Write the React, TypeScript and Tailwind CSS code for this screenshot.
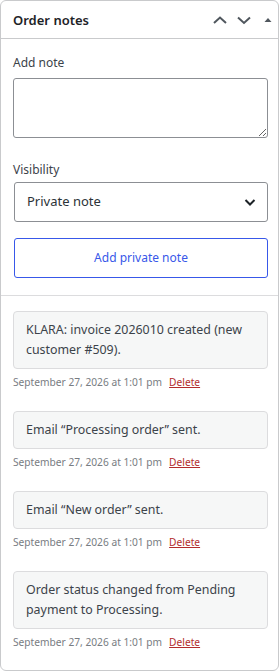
import React from "react";

type Note = { id: number; text: string; date: string };

const notes: Note[] = [
  { id: 1, text: "KLARA: invoice 2026010 created (new customer #509).", date: "September 27, 2026 at 1:01 pm" },
  { id: 2, text: "Email \u201cProcessing order\u201d sent.", date: "September 27, 2026 at 1:01 pm" },
  { id: 3, text: "Email \u201cNew order\u201d sent.", date: "September 27, 2026 at 1:01 pm" },
  { id: 4, text: "Order status changed from Pending payment to Processing.", date: "September 27, 2026 at 1:01 pm" },
];

function Chevron({ down = false }: { down?: boolean }) {
  return (
    <svg width="14" height="14" viewBox="0 0 14 14" className="text-[#50575e]">
      <path
        d={down ? "M1 4.5 L7 10 L13 4.5" : "M1 10 L7 4.5 L13 10"}
        fill="none"
        stroke="currentColor"
        strokeWidth="2"
      />
    </svg>
  );
}

export default function App() {
  return (
    <div className="min-h-screen bg-white font-['Noto_Sans',sans-serif]">
      <div className="w-[279px] h-[671px] border border-[#c9cacc] rounded-[6px] bg-white overflow-hidden">
        {/* Header */}
        <div className="h-[38px] flex items-center justify-between pl-[12px] pr-[4px] border-b border-[#c9cacc]">
          <h2 className="text-[13px] leading-[20px] mt-[1px] font-semibold text-[#1d2327]">Order notes</h2>
          <div className="flex items-center gap-[10px]">
            <Chevron />
            <Chevron down />
            <svg width="12" height="12" viewBox="0 0 12 12" className="ml-[1px] text-[#50575e]">
              <path d="M2.5 8 L6 4 L9.5 8 Z" fill="currentColor" />
            </svg>
          </div>
        </div>

        {/* Add note form */}
        <div className="px-[12px] pt-[14px] pb-[17px] border-b border-[#dcdcde]">
          <label className="block text-[12px] leading-[20px] text-[#3c434a] mb-[5px]">Add note</label>
          <textarea className="block w-[255px] h-[60px] border border-[#8c8f94] rounded-[3px] resize-y" />
          <label className="block mt-[22px] text-[12px] leading-[20px] text-[#3c434a] mb-[2px]">Visibility</label>
          <div className="ml-[1px] w-[254px] h-[40px] border border-[#8c8f94] rounded-[3px] flex items-center justify-between pl-[12px] pr-[10px]">
            <span className="text-[13px] text-[#2c3338]">Private note</span>
            <svg width="14" height="14" viewBox="0 0 14 14" className="text-[#1d2327]">
              <path d="M2.5 5 L7 9.5 L11.5 5" fill="none" stroke="currentColor" strokeWidth="2" />
            </svg>
          </div>
          <button className="mt-[16px] ml-[1px] w-[254px] h-[40px] border border-[#3858e9] rounded-[3px] text-[12px] text-[#3858e9] bg-white">
            Add private note
          </button>
        </div>

        {/* Notes list */}
        <ul className="px-[12px] pt-[15px]">
          {notes.map((n) => (
            <li key={n.id} className="mb-[20px]">
              <div className="w-[255px] bg-[#f6f7f7] border border-[#dcdcde] rounded-[4px] px-[12px] py-[8px] text-[12.4px] leading-[20px] text-[#3c434a]">
                {n.text}
              </div>
              <p className="mt-[4px] text-[10.2px] leading-[18px] text-[#787c82]">
                {n.date}
                <a href="#" className="ml-[7px] text-[#b32d2e] underline">Delete</a>
              </p>
            </li>
          ))}
        </ul>
      </div>
    </div>
  );
}
